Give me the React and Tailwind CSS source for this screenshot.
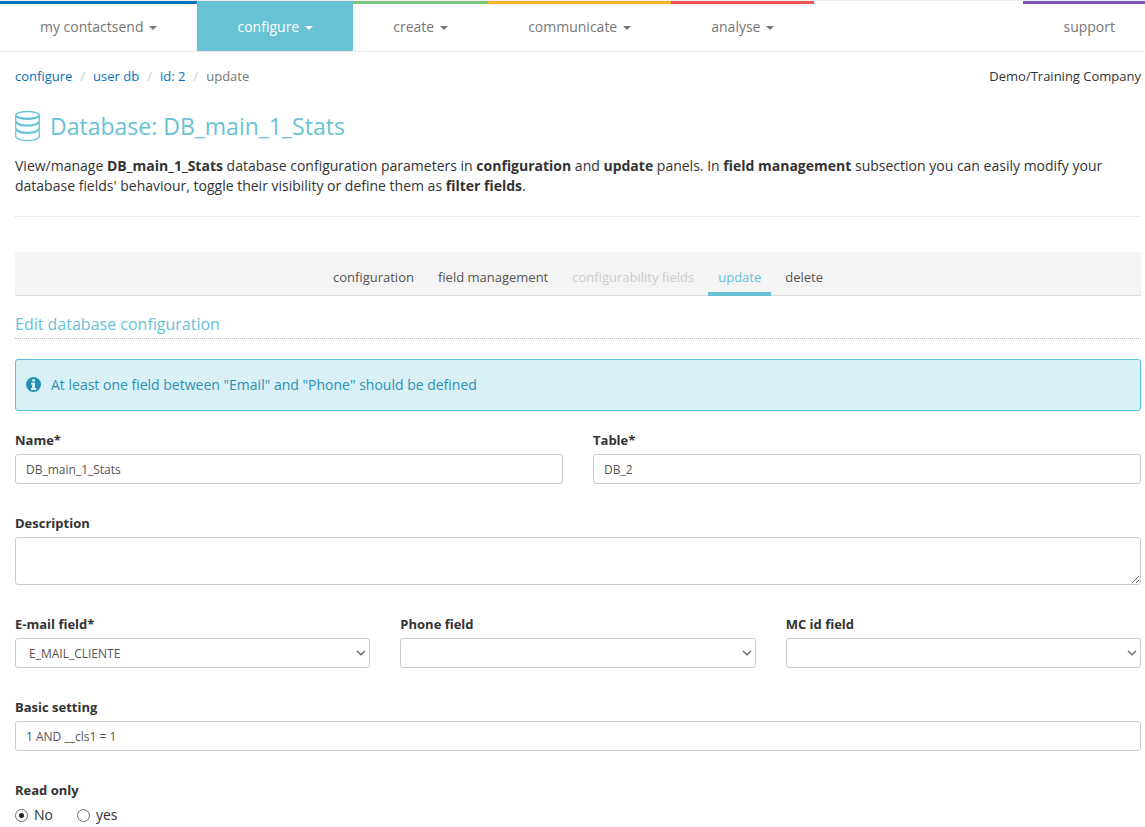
import React from "react";

const navItems = [
  { label: "my contactsend", bar: "border-[#0073b9]", tone: "text-[#777777]" },
  { label: "configure", bar: "border-[#67c2d4]", tone: "bg-[#67c2d4] text-white" },
  { label: "create", bar: "border-[#7bc57f]", tone: "text-[#777777]" },
  { label: "communicate", bar: "border-[#f8b331]", tone: "text-[#777777]" },
  { label: "analyse", bar: "border-[#ed5450]", tone: "text-[#777777]" },
];

const tabs = [
  { label: "configuration", tone: "border-transparent text-[#555555]" },
  { label: "field management", tone: "border-transparent text-[#555555]" },
  { label: "configurability fields", tone: "border-transparent text-[#cccccc]", disabled: true },
  { label: "update", tone: "border-[#67c2d4] text-[#67c2d4]", current: true },
  { label: "delete", tone: "border-transparent text-[#555555]" },
];

const control =
  "block w-full rounded-[3px] border border-[#cccccc] bg-white text-xs text-[#555555] outline-none focus:border-[#67c2d4]";

function Caret() {
  return (
    <svg width="8" height="4" viewBox="0 0 8 4" className="mt-0.5 fill-current" aria-hidden="true">
      <path d="M0 0h8L4 4z" />
    </svg>
  );
}

function DatabaseIcon() {
  return (
    <svg width="26" height="32" viewBox="0 0 26 32" fill="none" stroke="#67c2d4" aria-hidden="true">
      <ellipse cx="12.500" cy="5" rx="11.800" ry="3.500" strokeWidth="1.300" />
      <path
        strokeWidth="1.300"
        d="M.7 5v6.500M24.300 5v6.500M.7 13v6M24.300 13v6M.7 20.500V26c0 2.700 5.300 4.600 11.800 4.600S24.300 28.700 24.300 26v-5.500"
      />
      <path
        strokeWidth="2.100"
        d="M1.200 6.200c1.400 1.900 5.800 2.700 11.300 2.700s9.900-.8 11.300-2.700M.9 11.300c.6 2.700 5.400 4.300 11.600 4.300s11-1.600 11.600-4.300M.9 18.600c.6 2.700 5.400 4.300 11.600 4.300s11-1.600 11.600-4.300"
      />
    </svg>
  );
}

function InfoIcon() {
  return (
    <svg width="16" height="16" viewBox="0 0 16 16" className="shrink-0" aria-hidden="true">
      <circle cx="7.500" cy="7.500" r="7.500" fill="#2492b5" />
      <path
        d="M6.200 2.200h2.800v2.300H6.200zM5 5.700h4v5.300h1.200v1.900H5v-1.900h1.200V7.600H5z"
        fill="#d9f0f6"
      />
    </svg>
  );
}

function Field({ id, label, children }) {
  return (
    <div className="min-w-0 flex-1">
      <label htmlFor={id} className="mb-1 block text-[13px] leading-5 font-bold text-[#333333]">
        {label}
      </label>
      {children}
    </div>
  );
}

function Select({ id, options }) {
  return (
    <div className="grid items-center">
      <select id={id} className={`${control} col-start-1 row-start-1 h-[30px] appearance-none pt-px pr-6 pl-[13px]`}>
        {options.map((option) => (
          <option key={option}>{option}</option>
        ))}
      </select>
      <svg
        width="10"
        height="6"
        viewBox="0 0 10 6"
        fill="none"
        stroke="#6b6b6b"
        strokeWidth="1.500"
        className="pointer-events-none col-start-1 row-start-1 mr-1 justify-self-end"
        aria-hidden="true"
      >
        <path d="M1 1l4 3.700L9 1" />
      </svg>
    </div>
  );
}

function Radio({ label, defaultChecked }) {
  return (
    <label className="flex items-center gap-1.5 text-sm leading-[22px] text-[#333333]">
      <input
        type="radio"
        name="readonly"
        defaultChecked={defaultChecked}
        className="size-[13px] appearance-none rounded-full border border-[#6b6b6b] bg-white bg-clip-content p-[3px] checked:bg-[#222222]"
      />
      {label}
    </label>
  );
}

export default function App() {
  return (
    <div className="min-h-screen bg-white font-['Open_Sans',sans-serif] text-sm text-[#333333]">
      <nav className="flex justify-between border-y border-[#eeeeee]">
        <div className="flex">
          {navItems.map((item) => (
            <button
              key={item.label}
              type="button"
              className={`flex h-[50px] items-center gap-1.5 border-t-[3px] px-10 pb-px ${item.bar} ${item.tone}`}
            >
              {item.label}
              <Caret />
            </button>
          ))}
        </div>
        <a
          href="#support"
          className="flex h-[50px] items-center border-t-[3px] border-[#7e57c2] pr-[30px] pb-px pl-10 text-[#777777]"
        >
          support
        </a>
      </nav>

      <main className="pr-1 pl-[15px]">
        <div className="flex items-center justify-between pt-3.5 text-[13px] leading-5">
          <ol className="flex text-[#777777]">
            <li>
              <a href="#configure" className="text-[#0073b9]">configure</a>
              <span className="px-2 text-[#cccccc]">/</span>
            </li>
            <li>
              <a href="#userdb" className="text-[#0073b9]">user db</a>
              <span className="px-2 text-[#cccccc]">/</span>
            </li>
            <li>
              <a href="#id" className="text-[#0073b9]">id: 2</a>
              <span className="px-2 text-[#cccccc]">/</span>
            </li>
            <li>update</li>
          </ol>
          <span>Demo/Training Company</span>
        </div>

        <h1 className="mt-6 flex items-center gap-[9px] text-[23px] leading-8 text-[#67c2d4]">
          <DatabaseIcon />
          Database: DB_main_1_Stats
        </h1>
        <p className="mt-3.5 text-sm leading-5">
          View/manage <b>DB_main_1_Stats</b> database configuration parameters in <b>configuration</b> and{" "}
          <b>update</b> panels. In <b>field management</b> subsection you can easily modify your database
          fields' behaviour, toggle their visibility or define them as <b>filter fields</b>.
        </p>
        <hr className="mt-5 border-t border-dotted border-[#dddddd]" />

        <div className="mt-[35px] flex h-11 justify-center gap-1 border-b border-[#dddddd] bg-[#f4f4f4]">
          {tabs.map((tab) => (
            <button
              key={tab.label}
              type="button"
              disabled={tab.disabled}
              aria-current={tab.current ? "page" : undefined}
              className={`h-11 border-b-4 px-2.5 pt-2.5 text-[13px] ${tab.tone}`}
            >
              {tab.label}
            </button>
          ))}
        </div>

        <h2 className="mt-[17px] border-b border-dotted border-[#bbbbbb] pb-[3px] text-base leading-[22px] text-[#67c2d4]">
          Edit database configuration
        </h2>
        <div
          role="status"
          className="mt-5 flex h-[52px] items-center gap-[9px] rounded-[3px] border border-[#5bc0de] bg-[#d9f0f6] px-2.5 text-[#2d8fb0]"
        >
          <InfoIcon />
          At least one field between "Email" and "Phone" should be defined
        </div>

        <form className="mt-[19px] flex flex-col gap-[29px]">
          <div className="flex gap-[30px]">
            <Field id="name" label="Name*">
              <input id="name" type="text" defaultValue="DB_main_1_Stats" className={`${control} h-[30px] px-2.5`} />
            </Field>
            <Field id="table" label="Table*">
              <input id="table" type="text" defaultValue="DB_2" className={`${control} h-[30px] px-2.5`} />
            </Field>
          </div>
          <Field id="description" label="Description">
            <textarea id="description" className={`${control} h-12 px-2.5 py-1`} />
          </Field>
          <div className="flex gap-[30px]">
            <Field id="email" label="E-mail field*">
              <Select id="email" options={["E_MAIL_CLIENTE"]} />
            </Field>
            <Field id="phone" label="Phone field">
              <Select id="phone" options={[""]} />
            </Field>
            <Field id="mcid" label="MC id field">
              <Select id="mcid" options={[""]} />
            </Field>
          </div>
          <Field id="basic" label="Basic setting">
            <input id="basic" type="text" defaultValue="1 AND __cls1 = 1" className={`${control} h-[30px] px-2.5`} />
          </Field>
          <fieldset>
            <legend className="mb-1 text-[13px] leading-5 font-bold">Read only</legend>
            <div className="flex gap-6">
              <Radio label="No" defaultChecked />
              <Radio label="yes" />
            </div>
          </fieldset>
        </form>
      </main>
    </div>
  );
}
